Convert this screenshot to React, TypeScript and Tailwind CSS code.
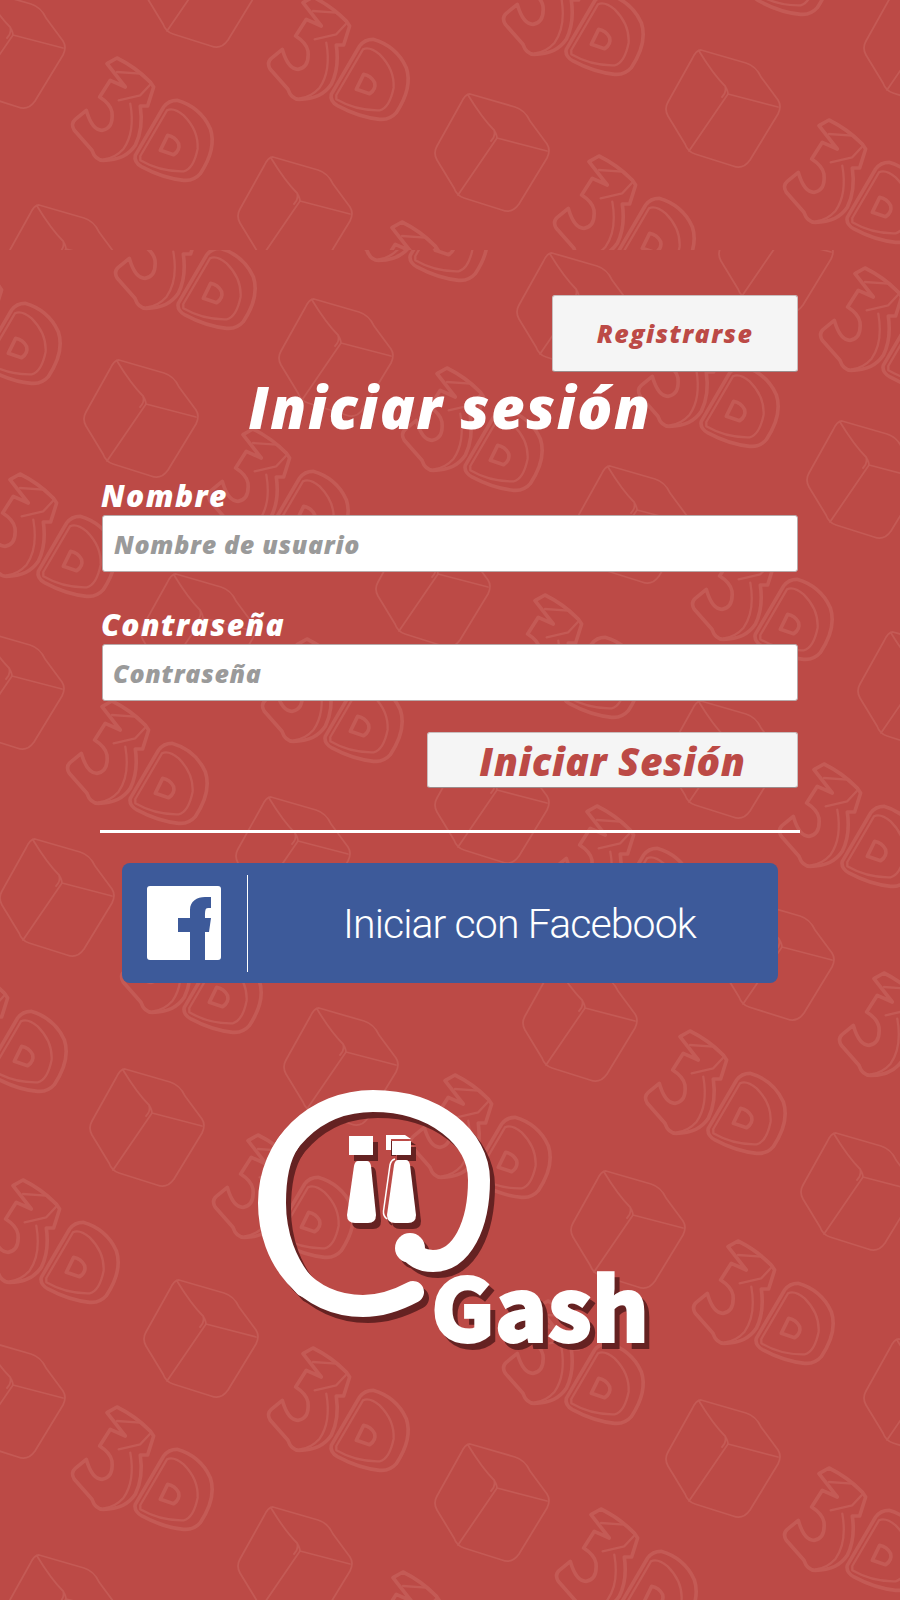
const cubesTop = [
  [11, 35], [204, -26], [726, 94], [495, 138], [298, 201], [64, 249], [924, 33],
]
const cubes = [
  [339, 343], [144, 404], [577, 297], [779, 239], [867, 465], [635, 510], [436, 574],
  [201, 618], [10, 676], [726, 745], [495, 790], [296, 841], [918, 676], [60, 883],
  [583, 1008], [780, 947], [344, 1052], [150, 1113], [861, 1177], [631, 1215], [204, 1324],
  [11, 1385], [924, 1383], [726, 1444], [495, 1488], [298, 1551], [64, 1599],
]
const threeDTop = [
  [72, 57], [268, -4], [503, -49], [784, 119], [554, 155], [357, 221], [689, -109],
]
const threeD = [
  [115, 205], [347, 157], [-80, 260], [820, 267], [402, 367], [638, 323], [208, 428],
  [-25, 473], [500, 594], [692, 536], [262, 638], [67, 700], [552, 805], [779, 763],
  [121, 909], [-74, 968], [839, 972], [645, 1030], [410, 1074], [213, 1134], [-22, 1179],
  [693, 1240], [503, 1300], [268, 1347], [72, 1406], [784, 1467], [556, 1508], [358, 1571],
]

const Pattern = () => (
  <svg className="absolute inset-0" width="900" height="1600" viewBox="0 0 900 1600" fill="none" stroke="#c45a55" strokeLinejoin="round" strokeLinecap="round">
    <defs>
      <clipPath id="top-band">
        <rect x="0" y="0" width="900" height="250" />
      </clipPath>
      <clipPath id="rest">
        <rect x="0" y="250" width="900" height="1350" />
      </clipPath>
      <g id="cube" strokeWidth="1.8" transform="translate(2 0)">
        <path d="M-27,-44 L18,-31 Q28,-28 33,-17 L50,6 Q54,12 50,20 L22,66 Q15,76 5,72 L-33,60 Q-40,58 -43,50 L-60,22 Q-64,15 -60,8 L-36,-35 Q-32,-44 -27,-44 Z" />
        <path d="M-29,-43 Q-15,-20 -3,-8 Q0,-3 0,0 L50,13 M0,0 L-39,57 M-3,-8 Q-1,-2 -6,3" />
      </g>
      <g id="three-d" strokeWidth="11" transform="translate(-11.7 -25) scale(0.3333)">
        <path d="M140,95 L170,78 Q225,105 270,150 L280,165 L262,222 L240,222 Q250,290 225,340 Q195,385 130,385 Q105,385 95,355 L42,295 Q30,275 45,262 L78,235 Q95,295 125,295 Q160,290 155,240 Q150,215 118,195 L150,145 L195,165 Z" />
        <path d="M170,120 L240,125 L272,155 M175,205 L240,190 L268,160 M210,215 Q225,300 190,350 Q165,378 130,382" strokeWidth="7" />
        <path d="M225,370 L310,225 Q325,205 350,205 Q420,225 450,290 Q470,350 420,425 Q400,448 370,445 Q310,440 245,405 Q220,390 225,370 Z" />
        <path d="M240,372 L320,235 Q340,225 370,250 Q415,295 412,350 Q400,410 370,418 Q300,420 240,385 Z" strokeWidth="7" />
        <path d="M322,310 L300,355 L340,368 Q360,355 355,335 Q345,315 322,310 Z" />
      </g>
    </defs>
    <g clipPath="url(#top-band)">
      {cubesTop.map(([x, y]) => (
        <use key={`ct${x}${y}`} href="#cube" x={x} y={y} />
      ))}
      {threeDTop.map(([x, y]) => (
        <use key={`dt${x}${y}`} href="#three-d" x={x} y={y} />
      ))}
    </g>
    <g clipPath="url(#rest)">
      {cubes.map(([x, y]) => (
        <use key={`c${x}${y}`} href="#cube" x={x} y={y} />
      ))}
      {threeD.map(([x, y]) => (
        <use key={`d${x}${y}`} href="#three-d" x={x} y={y} />
      ))}
    </g>
  </svg>
)

const Logo = () => (
  <svg className="self-center mt-[87px] not-italic drop-shadow-[5px_6px_0_#652222]" width="420" height="300" viewBox="0 0 420 300">
    <path
      d="M173,222 C158,230 140,236 123,236 C68,236 29,190 29,133 C29,75 75,31 133,31 C195,31 239,68 239,110 C239,155 222,191 193,191 C182,191 172,186 170,178"
      fill="none"
      stroke="#fff"
      strokeWidth="22"
      strokeLinecap="round"
    />
    {/* left side of the ring is a bit heavier */}
    <path d="M49,72 C38,88 35,110 35,133 C35,165 46,195 65,216" fill="none" stroke="#fff" strokeWidth="22" strokeLinecap="round" />
    <circle cx="170" cy="178" r="15" fill="#fff" />
    <g fill="#fff">
      <rect x="109" y="66" width="24" height="19" />
      <path d="M118,91 H127 Q130,91 131,96 L136,145 Q136,153 128,153 H115 Q107,153 107,145 L114,96 Q115,91 118,91 Z" />
      <path d="M146,65 H165 L171,69 H151 V80 H146 Z" />
      <rect x="152" y="71" width="19" height="14" />
      <path d="M158,90 H166 Q169,90 170,95 L176,145 Q176,153 168,153 H155 Q147,153 147,145 L154,95 Q155,90 158,90 Z" />
      <path d="M155,89 Q151,90 150,95 L143.5,141 Q143,146 147,149" fill="none" stroke="#fff" strokeWidth="1.5" />
    </g>
    <text x="191" y="272" fill="#fff" stroke="#fff" strokeWidth="2" fontSize="87" fontWeight="900" fontStyle="normal" fontFamily="'Noto Sans CJK JP', 'Noto Sans', sans-serif">
      Gash
    </text>
  </svg>
)

const App = () => {
  return (
    <div className="relative w-[900px] h-[1600px] overflow-hidden bg-[#bc4a46]">
      <Pattern />

      <div className="relative flex flex-col px-[102px] pt-[295px] font-['Open_Sans',sans-serif] italic font-extrabold">
        {/* Top action */}
        <button className="self-end w-[246px] h-[77px] rounded-[3px] bg-[#f5f5f5] border border-[#c9bdbd] border-b-[#9c8c8c] text-[25px] tracking-[1.4px] text-[#bc4a46]">
          Registrarse
        </button>

        <h1 className="mt-[2px] h-[68px] text-center text-[58px] leading-[66px] tracking-[1.6px] text-white">
          Iniciar sesión
        </h1>

        {/* Form */}
        <label className="mt-[34px] h-[39px] text-[30px] leading-[39px] tracking-[1.4px] text-white -ml-[1px]">
          Nombre
        </label>
        <input
          placeholder="Nombre de usuario"
          className="h-[57px] px-[11px] rounded-[3px] bg-white border border-[#b8aaaa] text-[25px] tracking-[0.7px] not-italic placeholder:italic placeholder:text-[#9a9a9a] outline-none"
        />

        <label className="mt-[34px] h-[38px] text-[30px] leading-[38px] tracking-[1.4px] text-white -ml-[1px]">
          Contraseña
        </label>
        <input
          placeholder="Contraseña"
          className="h-[57px] px-[10px] rounded-[3px] bg-white border border-[#b8aaaa] text-[25px] tracking-[0.7px] not-italic placeholder:italic placeholder:text-[#9a9a9a] outline-none"
        />

        <button className="self-end mt-[31px] w-[371px] h-[56px] rounded-[3px] bg-[#f5f5f5] border border-[#c9bdbd] border-b-[#9c8c8c] text-[39px] tracking-[0.6px] leading-none text-[#bc4a46]">
          Iniciar Sesión
        </button>

        <hr className="mt-[42px] -mx-[2px] h-[3px] border-0 bg-white" />

        {/* Facebook */}
        <button className="mt-[30px] mx-[20px] h-[120px] flex items-center rounded-[8px] bg-[#3d5a9a] pl-[25px] text-white not-italic">
          <svg width="74" height="74" viewBox="0 0 74 74">
            <rect width="74" height="74" rx="3" fill="#fff" />
            <path d="M43,74 V46 H31 V32 H43 V24 C43,15 50,11 58,11 H64 V22 H61 C58,22 58,25 58,32 H64 L62,46 H58 V74 Z" fill="#3d5a9a" />
          </svg>
          <span className="ml-[26px] w-px h-[97px] bg-white" />
          <span className="ml-[95px] mt-[4px] text-[41px] font-['Roboto',sans-serif] font-light tracking-[-0.9px]">
            Iniciar con Facebook
          </span>
        </button>

        <Logo />
      </div>
    </div>
  )
}

export default App
